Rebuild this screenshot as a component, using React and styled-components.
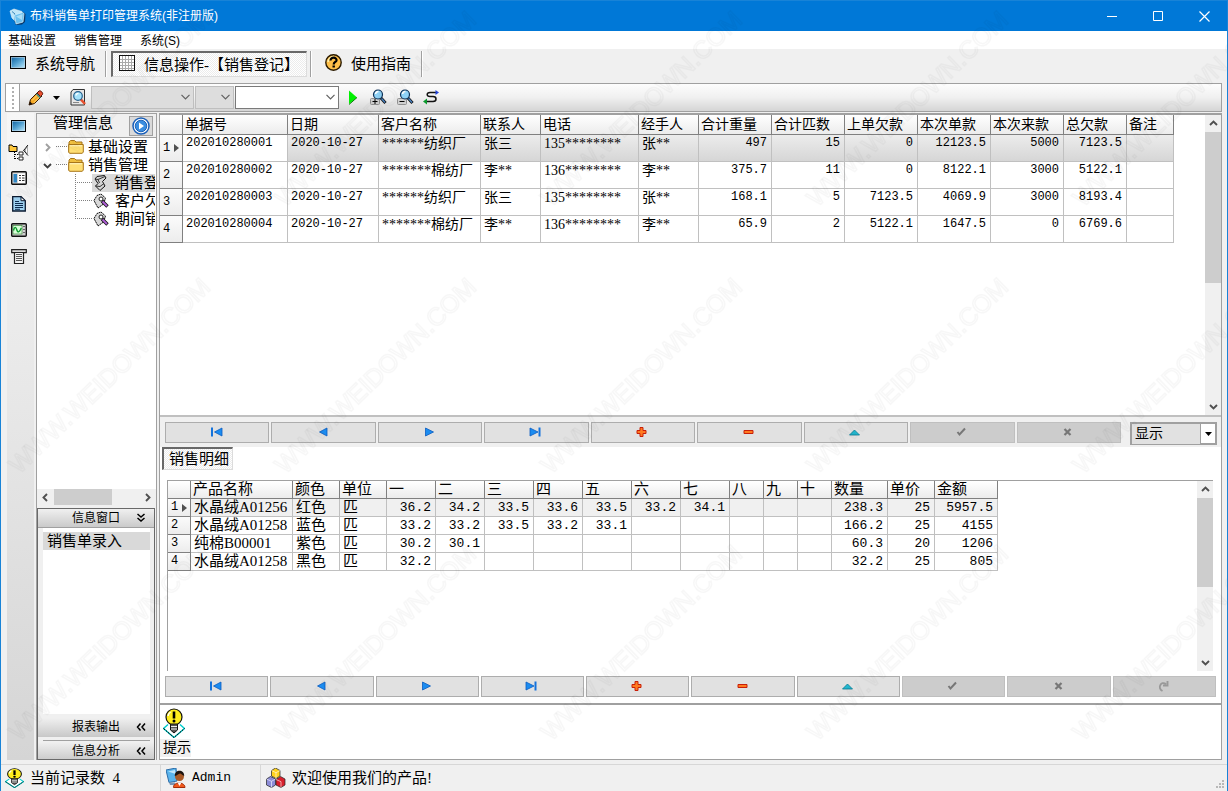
import React from 'react'
import styled, { createGlobalStyle, css } from 'styled-components'

const GlobalStyle = createGlobalStyle`
  * { box-sizing: border-box; }
  body {
    margin: 0;
    background: #f0f0f0;
    color: #000;
    font-family: "Liberation Serif", "Noto Sans CJK SC", serif;
    font-size: 15px;
    line-height: 18px;
  }
  button, select {
    margin: 0;
    padding: 0;
    border: 0;
    border-radius: 0;
    background: none;
    color: inherit;
    font: inherit;
  }
  a { color: inherit; text-decoration: none; }
  svg { display: block; flex: none; }
`

const mono = '"Liberation Mono", "Noto Sans CJK SC", monospace'

const Window = styled.div`
  position: relative;
  display: flex;
  flex-direction: column;
  min-height: 100vh;
  border: 1px solid #1883d7;
  overflow: hidden;
`

const TitleBar = styled.header`
  display: flex;
  align-items: center;
  height: 30px;
  padding-left: 8px;
  background: #0078d7;
  color: #fff;
`

const Title = styled.h1`
  flex: 1;
  margin: 0 0 0 4px;
  font: 12px/18px "Liberation Sans", "Noto Sans CJK SC", sans-serif;
`

const CaptionButton = styled.button`
  display: flex;
  align-items: center;
  justify-content: center;
  width: 46px;
  height: 30px;
`

const MenuBar = styled.nav`
  display: flex;
  gap: 18px;
  height: 18px;
  padding-left: 7px;
  background: #fff;
  font: 12px/20px "Liberation Sans", "Noto Sans CJK SC", sans-serif;
`

const TabBar = styled.div`
  display: flex;
  align-items: center;
  height: 33px;
  padding: 2px 0 5px;
`

const dither = css`
  background: repeating-conic-gradient(#fff 0 25%, #ececec 0 50%) 0 0 / 2px 2px;
`

const BarTab = styled.button`
  display: flex;
  align-items: center;
  gap: 9px;
  height: 26px;
  padding: 0 9px;
  white-space: nowrap;
  svg { margin-bottom: 3px; }
  ${p => p.$pressed && css`
    ${dither}
    padding: 0 7px 0 6px;
    border: 1px solid #dcdcdc;
    border-top: 2px solid #696969;
    border-left: 2px solid #696969;
  `}
`

const Divider = styled.div`
  width: 2px;
  height: 26px;
  margin: 0 4px 0 ${p => p.$wide ? 3 : 1}px;
  border-left: 1px solid #a0a0a0;
  border-right: 1px solid #fff;
`

const ToolBar = styled.div`
  display: flex;
  align-items: center;
  height: 29px;
  margin: 1px 5px 0 4px;
  border: 1px solid #a0a0a0;
  background: linear-gradient(#fdfdfd, #f0f0f0 50%, #d5d5d5);
`

const Grip = styled.div`
  display: flex;
  align-items: center;
  justify-content: center;
  align-self: stretch;
  width: 14px;
  margin-right: 2px;
  border-right: 1px solid #a0a0a0;
  background: #fff;
`

const ToolButton = styled.button`
  display: flex;
  align-items: center;
  justify-content: center;
  width: ${p => p.$width || 27}px;
  height: 24px;
`

const Picker = styled.div`
  position: relative;
  width: ${p => p.$width}px;
  height: 23px;
  margin-right: 1px;
  svg {
    position: absolute;
    top: 8px;
    right: 4px;
    pointer-events: none;
  }
  select {
    width: 100%;
    height: 23px;
    border: 1px solid #7a7a7a;
    background: #fff;
    appearance: none;
  }
  select:disabled {
    border-color: #bfbfbf;
    background: #ddd;
    opacity: 1;
  }
`

const Body = styled.div`
  display: flex;
  flex: 1;
  min-height: 0;
  margin: 1px 5px 0 6px;
`

const IconStrip = styled.nav`
  display: flex;
  flex-direction: column;
  align-items: center;
  gap: 10px;
  width: 27px;
  padding: 5px 4px 0 0;
  margin-right: 2px;
  background: linear-gradient(#f6f6f6, #d5d5d5);
`

const StripButton = styled.button`
  display: flex;
  align-items: center;
  justify-content: center;
  width: 22px;
  height: 16px;
`

const Sidebar = styled.aside`
  display: flex;
  flex-direction: column;
  width: 121px;
  margin-right: 2px;
  border: solid #a0a0a0;
  border-width: 1px 1px 0 1px;
`

const SideHead = styled.div`
  display: flex;
  align-items: center;
  justify-content: space-between;
  height: 24px;
  padding: 0 3px 0 16px;
  border-bottom: 1px solid #a0a0a0;
`

const SideTitle = styled.h2`
  margin: 0 0 5px;
  font-size: 15px;
  font-weight: normal;
`

const RoundButton = styled.button`
  display: flex;
  align-items: center;
  justify-content: center;
  width: 24px;
  height: 20px;
  border: 1px solid #a0a0a0;
  background: #dadada;
`

const Tree = styled.ul`
  flex: 1 0 350px;
  margin: 0;
  padding: 0;
  list-style: none;
  overflow: hidden;
  background: #fff;
`

const TreeNode = styled.li`
  display: flex;
  align-items: center;
  height: 18px;
  padding: 0 1px 0 ${p => p.$child ? 38 : 6}px;
  white-space: nowrap;
`

const Twig = styled.span`
  width: ${p => p.$child ? 17 : 11}px;
  height: ${p => p.$last ? 9 : 18}px;
  margin-left: ${p => p.$child ? 0 : 4}px;
  align-self: flex-start;
  flex: none;
  background: linear-gradient(90deg, #808080 50%, transparent 0) 0 8px / 2px 1px repeat-x;
  ${p => p.$child && css`
    background:
      linear-gradient(90deg, #808080 50%, transparent 0) 0 8px / 2px 1px repeat-x,
      linear-gradient(#808080 50%, transparent 0) 0 0 / 1px 2px repeat-y;
  `}
`

const NodeLabel = styled.a`
  display: flex;
  align-items: center;
  gap: ${p => p.$child ? 6 : 4}px;
  flex: 1;
  min-width: 0;
  padding-left: 1px;
  overflow: hidden;
  background: ${p => p.$active ? '#d9d9d9' : 'none'};
  span {
    flex: 1;
    min-width: 0;
    overflow: hidden;
  }
`

const HScroll = styled.div`
  display: grid;
  grid-template-columns: 17px 58px 1fr 17px;
  align-items: center;
  justify-items: center;
  height: 16px;
  background: #f0f0f0;
  span { width: 100%; height: 16px; background: #cdcdcd; }
`

const Accordion = styled.div`
  display: flex;
  flex-direction: column;
  height: 252px;
  margin: 3px 1px 0 0;
  border: 1px solid #696969;
  overflow: hidden;
`

const AccordionHead = styled.button`
  display: flex;
  align-items: center;
  justify-content: space-between;
  flex: none;
  height: 19px;
  padding: 0 8px 0 34px;
  border-bottom: 1px solid ${p => p.$open ? '#a0a0a0' : '#c8c8c8'};
  background: linear-gradient(#f0f0f0, #cacaca);
  font-size: 12px;
`

const AccordionBody = styled.div`
  flex: 1 0 186px;
  margin: 0 4px 4px 5px;
  padding-top: 4px;
  background: #fff;
`

const AccordionGap = styled.div`
  height: 5px;
  flex: none;
  margin: 0 4px 0 5px;
  background: linear-gradient(#a0a0a0, #a0a0a0) 0 3px / 100% 1px no-repeat;
`

const EntryLink = styled.a`
  display: block;
  padding-left: 4px;
  background: #d9d9d9;
`

const Main = styled.main`
  display: flex;
  flex: 1;
  flex-direction: column;
  min-width: 0;
  border: 1px solid #a0a0a0;
  background: #fff;
`

const GridPane = styled.div`
  display: flex;
  flex: ${p => p.$detail ? '2 0 191px' : '3 0 301px'};
  justify-content: space-between;
  min-width: 0;
  border-top: 1px solid #a0a0a0;
  ${p => p.$detail && css`
    margin: 10px 8px 5px 7px;
    border-left: 1px solid #a0a0a0;
  `}
`

const GridScroll = styled.div`
  flex: 1;
  min-width: 0;
  overflow: hidden;
`

const DataTable = styled.table`
  width: ${p => p.$width}px;
  border-spacing: 0;
  table-layout: fixed;
  white-space: nowrap;
  font-size: ${p => p.$size}px;

  th, td {
    height: ${p => p.$row}px;
    padding: 0 4px 0 3px;
    border-right: 1px solid #c0c0c0;
    border-bottom: 1px solid #c0c0c0;
    font-weight: normal;
    text-align: left;
    vertical-align: top;
    line-height: 17px;
    overflow: hidden;
  }
  thead th {
    height: ${p => p.$head}px;
    padding: 0 0 0 2px;
    border-color: #808080;
    background: linear-gradient(#fff, #ececec);
    line-height: ${p => p.$head - 1}px;
  }
`

const RowHead = styled.th`
  && {
    padding: 0 0 0 3px;
    border-color: #808080;
    background: linear-gradient(#fbfbfb, #ececec);
    vertical-align: middle;
    font-family: ${mono};
    font-size: 12px;
  }
  div {
    display: flex;
    align-items: center;
    gap: 4px;
  }
`

const Cell = styled.td`
  && {
    text-align: ${p => p.$kind === 'num' ? 'right' : 'left'};
    background: ${p => p.$fill};
    ${p => p.$kind && css`
      font-family: ${mono};
      font-size: ${p.$size}px;
    `}
  }
`

const VScroll = styled.div`
  display: flex;
  flex-direction: column;
  align-items: center;
  width: 16px;
  background: #f0f0f0;
`

const ScrollArrow = styled.button`
  display: flex;
  align-items: center;
  justify-content: center;
  width: 16px;
  height: 17px;
`

const ScrollTrack = styled.div`
  flex: 1;
  width: 16px;
  span {
    display: block;
    height: ${p => p.$thumb}px;
    background: #cdcdcd;
  }
`

const NavPanel = styled.div`
  display: flex;
  gap: 9px;
  padding: 5px 4px 2px 5px;
  height: 32px;
  border-top: 2px solid #c0c0c0;
  background: #f0f0f0;
`

const DetailNav = styled.div`
  padding: 0 5px 6px;
`

const Navigator = styled.div`
  display: flex;
  flex: 1;
  gap: 2px;
`

const NavButton = styled.button`
  display: flex;
  flex: 1;
  align-items: center;
  justify-content: center;
  height: 21px;
  padding: 0 2px 2px 0;
  border: 1px solid #adadad;
  background: #e1e1e1;
  &:disabled {
    border-color: #bfbfbf;
    background: #ccc;
  }
`

const ShowPicker = styled.div`
  position: relative;
  width: 87px;
  height: 23px;
  select {
    width: 100%;
    height: 23px;
    padding-left: 3px;
    border: 2px solid #a0a0a0;
    border-right-width: 1px;
    border-bottom-width: 1px;
    background: #e1e1e1;
    font-size: 14px;
    appearance: none;
  }
  span {
    position: absolute;
    top: 1px;
    right: 1px;
    display: flex;
    align-items: center;
    justify-content: center;
    width: 16px;
    height: 21px;
    border: 1px solid #a0a0a0;
    background: #fff;
    pointer-events: none;
  }
`

const DetailTab = styled.button`
  ${dither}
  align-self: flex-start;
  height: 23px;
  margin-left: 2px;
  padding: 0 3px 0 5px;
  border: 1px solid #dcdcdc;
  border-top: 2px solid #696969;
  border-left: 2px solid #696969;
`

const HintPane = styled.div`
  height: 56px;
  border-top: 2px solid #a0a0a0;
  svg { margin: 3px 0 0 3px; }
  span {
    display: inline-block;
    padding: 0 0 0 3px;
    background: #f0f0f0;
    font-size: 14px;
  }
`

const StatusBar = styled.footer`
  display: flex;
  align-items: stretch;
  height: 27px;
  margin-top: 4px;
  border-top: 1px solid #d7d7d7;
`

const StatusItem = styled.div`
  display: flex;
  align-items: center;
  gap: 6px;
  min-width: ${p => p.$width}px;
  padding-left: ${p => p.$first ? 4 : 5}px;
  border-right: ${p => p.$last ? 0 : 1}px solid #d7d7d7;
  flex: ${p => p.$last ? 1 : 'none'};
  font-family: ${p => p.$mono ? mono : 'inherit'};
  font-size: ${p => p.$mono ? 13 : 15}px;
  white-space: pre;
`

const SizeGrip = styled.div`
  align-self: flex-end;
  padding: 0 2px 2px 0;
`

const Overlay = styled.svg`
  position: absolute;
  inset: 0;
  width: 100%;
  height: 100%;
  pointer-events: none;
`

/* ---------- icons ---------- */

const AppIcon = () => (
  <svg width="17" height="17" viewBox="0 0 17 17">
    <path d="M1 3.500 6 1l8 3 2.500 2-.5 8-3 2.500-6 .5z" fill="#083a6c" />
    <path d="M1 3 5 1l8 2.500v3L6 13 3 10z" fill="#bfe6f8" stroke="#e8f8ff" strokeWidth=".6" />
    <path d="M3 3.500 6 6v8" fill="none" stroke="#3d86b8" />
    <path d="M5.500 7 13.500 4.500l1.500 1-1 8.500L7 16z" fill="#6cc0ee" stroke="#d8f3ff" strokeWidth=".7" />
    <path d="M7 8.500 13.500 6l-.5 6z" fill="#a8def8" />
  </svg>
)

const ScreenIcon = ({ width = 15, height = 12 }) => (
  <svg width={width} height={height} viewBox="0 0 15 12" preserveAspectRatio="none">
    <defs>
      <linearGradient id="screen" x2="1" y2="1">
        <stop stopColor="#1565a0" />
        <stop offset=".45" stopColor="#4c9cce" />
        <stop offset="1" stopColor="#b5e4f8" />
      </linearGradient>
    </defs>
    <rect x=".5" y=".5" width="14" height="11" fill="#c8e2f4" stroke="#000" />
    <rect x="1.500" y="1.500" width="12" height="9" fill="url(#screen)" />
  </svg>
)

const SheetIcon = () => (
  <svg width="16" height="16" viewBox="0 0 16 16" shapeRendering="crispEdges">
    <rect width="16" height="16" fill="#111" />
    <rect x="1" y="1" width="14" height="14" fill="#fff" />
    <path d="M1 4.500h14M1 7.500h14M1 10.500h14M1 13.500h14M3.500 1v14M6.500 1v14M9.500 1v14M12.500 1v14" stroke="#aaa" />
  </svg>
)

const HelpIcon = () => (
  <svg width="17" height="17" viewBox="0 0 17 17">
    <circle cx="8.500" cy="8.500" r="7.700" fill="#ffc04a" stroke="#2a1a00" strokeWidth="1.400" />
    <path d="M3 8a6 6 0 0 1 6-5.500" stroke="#fff3b0" strokeWidth="1.500" fill="none" />
    <path d="M5.500 6.500c0-4 6.500-3.500 6 0-.3 1.500-2.800 1.600-2.800 4" stroke="#000" strokeWidth="2.200" fill="none" />
    <rect x="7.500" y="11.500" width="2.400" height="2" fill="#000" />
  </svg>
)

const GripIcon = () => (
  <svg width="3" height="24" shapeRendering="crispEdges">
    <path d="M1.500 1v22" stroke="#b0b0b0" strokeWidth="2" strokeDasharray="2 2" />
  </svg>
)

const PencilIcon = () => (
  <svg width="16" height="16" viewBox="0 0 16 16">
    <path d="M1 15 2.500 9.500 10 2l4 4-7.500 7.500z" fill="#f5a623" stroke="#3b1c04" />
    <path d="m4 10.500 6.500-6.500M6 12.500l6.500-6.500" stroke="#ffe07a" />
    <path d="m9 3 2-2c1.500-1 4.500 2 3.500 3.500l-2 2z" fill="#e8502e" stroke="#5a1208" />
    <path d="m8.500 4 3.800 3.800" stroke="#3f8f86" strokeWidth="1.500" />
    <path d="M1 15 2 11.500 4.500 14z" fill="#1a1008" />
  </svg>
)

const CaretIcon = () => (
  <svg width="7" height="4"><path d="M0 0h7L3.500 4z" fill="#000" /></svg>
)

const PreviewIcon = () => (
  <svg width="16" height="17" viewBox="0 0 16 17">
    <path d="M3 .5h11.500V16H1V3z" fill="#e6e6e6" stroke="#333" />
    <path d="M3 13.500h6" stroke="#888" />
    <path d="m10.500 10 4.500 5" stroke="#e8502e" strokeWidth="2.600" />
    <circle cx="8" cy="7" r="4.300" fill="#a5e2fa" stroke="#27618f" strokeWidth="1.200" />
    <path d="M5.800 6.500A2.500 2.500 0 0 1 8.500 4.500" stroke="#fff" strokeWidth="1.300" fill="none" />
  </svg>
)

const ChevronIcon = () => (
  <svg width="9" height="6" viewBox="0 0 9 6">
    <path d="m.5.8 4 4 4-4" fill="none" stroke="#606060" strokeWidth="1.200" />
  </svg>
)

const RunIcon = () => (
  <svg width="10" height="15" viewBox="0 0 10 15">
    <path d="M1 .5 9 7.500 1 14z" fill="#00f000" />
    <path d="M9 7.500 1 14.500" stroke="#077a07" />
  </svg>
)

const ZoomIcon = ({ plus }) => (
  <svg width="17" height="17" viewBox="0 0 17 17">
    <rect x=".5" y="9.500" width="9" height="6" rx="1" fill="#d0d0d0" stroke="#909090" />
    <path d="m10.500 8.500 5 5.500" stroke="#111" strokeWidth="3" />
    <path d="m11.500 9.500 3.500 4" stroke="#4a86c8" strokeWidth="1.400" />
    <circle cx="8" cy="5.500" r="4.500" fill="#8fd2f6" stroke="#0d2f55" strokeWidth="1.200" />
    <path d="M5.500 5a3 3 0 0 1 3-2.500" stroke="#fff" strokeWidth="1.500" fill="none" />
    <path d={plus ? 'M2.500 12.500h5M5 10v5' : 'M2.500 12.500h5'} stroke="#000" />
  </svg>
)

const CurveIcon = () => (
  <svg width="17" height="15" viewBox="0 0 17 15">
    <path d="M13 2.500H7c-4 0-3.500 4 0 4h3c4 0 4 5 0 5H3" fill="none" stroke="#111" strokeWidth="1.500" />
    <path d="M16 2.500 12.500 0v5z" fill="#2343d8" />
    <path d="m0 11.500 4-3v6z" fill="#0b9a2d" />
  </svg>
)

const FlowIcon = () => (
  <svg width="21" height="17" viewBox="0 0 21 17">
    <path d="M1 2.500V1h3l1 1.500h4V7.500H1z" fill="#ffc83c" stroke="#000" />
    <path d="M6.500 8v7M7 10.500h4M7 14.500h4" stroke="#000" strokeDasharray="1 1" />
    <path d="M11 8h4v3h-4zM11 13h4v3h-4z" fill="#fff" stroke="#222" />
    <path d="M20 1c-1.200 1-2 3-4.500 5.500 2.500 1.500 3 4 4.500 5" fill="#aaa" stroke="#111" />
    <path d="M18.500 4.500v4" stroke="#fff" />
  </svg>
)

const ListIcon = () => (
  <svg width="16" height="14" viewBox="0 0 16 14">
    <rect x=".7" y=".7" width="14.600" height="12.600" rx="1" fill="#d6d6d6" stroke="#111" strokeWidth="1.400" />
    <rect x="2.500" y="3" width="3.500" height="8.500" fill="#2f86c4" />
    <rect x="7" y="2.500" width="7" height="9.500" fill="#fff" />
    <path d="M8 4.500h2M8 7h2M8 9.500h2M11 4.500h2.500M11 7h2.500M11 9.500h2.500" stroke="#333" />
  </svg>
)

const DocIcon = () => (
  <svg width="14" height="16" viewBox="0 0 14 16">
    <path d="M.7.700h8.300l4.300 4V15H.7z" fill="#9fd2f2" stroke="#0a1a30" strokeWidth="1.300" />
    <path d="M9 .7v4h4.300z" fill="#fff" stroke="#0a1a30" />
    <path d="M3 5.500h4M3 7.500h8M3 9.500h8M3 11.500h8M3 13.300h5" stroke="#0d2c50" />
  </svg>
)

const ScopeIcon = () => (
  <svg width="16" height="14" viewBox="0 0 16 14">
    <rect x=".7" y=".7" width="14.600" height="12.600" rx="1" fill="#cfcfcf" stroke="#111" strokeWidth="1.400" />
    <rect x="2" y="2.500" width="9" height="8.500" fill="#d8ffd8" stroke="#2a7a2a" strokeWidth=".6" />
    <path d="M2.500 7.500c1-4 2.300-4 3.300-.8s2.500 3 4.500-1.700" fill="none" stroke="#0a9a2a" strokeWidth="1.400" />
    <path d="M13 3v1M13 6v1M13 9v1" stroke="#222" strokeWidth="1.200" />
  </svg>
)

const ScrollIcon = () => (
  <svg width="16" height="15" viewBox="0 0 16 15">
    <path d="M.7.700h14.600v3H.7z" fill="#dcdcdc" stroke="#222" strokeWidth="1.200" />
    <path d="M3.500 3.500h9v11h-9z" fill="#f4f4f4" stroke="#222" strokeWidth="1.200" />
    <path d="M5 5.500h6M5 7.500h6M5 9.500h6M5 11.500h6" stroke="#555" />
  </svg>
)

const CirclePlayIcon = () => (
  <svg width="18" height="18" viewBox="0 0 18 18">
    <circle cx="9" cy="9" r="8" fill="#fff" stroke="#1a5fb8" strokeWidth="1.500" />
    <circle cx="9" cy="9" r="5.800" fill="#3a8de0" stroke="#1c62b8" />
    <path d="m7 5.500 5 3.500-5 3.500z" fill="#fff" />
  </svg>
)

const FolderIcon = () => (
  <svg width="16" height="14" viewBox="0 0 16 14">
    <path d="M1 12.500V2l1.500-1.500h4L8 2h6v2.500" fill="#f0c040" stroke="#a8761a" />
    <path d="M.7 4.500h14.600v7.500l-1 1.300H1.500L.7 12z" fill="#ffdf74" stroke="#a8761a" />
    <path d="M2 5.800h12" stroke="#fff6c8" />
  </svg>
)

const BillIcon = () => (
  <svg width="15" height="16" viewBox="0 0 15 16">
    <path d="m2 4 2-2.500L11.500.500 13 3l-3.500 3.500L12 11l-5 4.500L2.500 11 5 8.500z" fill="#d4d4d4" stroke="#111" />
    <path d="m2 4 3 .5 7-3M5 4.500 6.500 8M2.500 11l4.500.5 4-3" fill="none" stroke="#333" />
  </svg>
)

const TagIcon = () => (
  <svg width="16" height="16" viewBox="0 0 16 16">
    <path d="M1 7.500 4 2.500 8 1l4.500 4-2 6-5.500 4z" fill="#d8d8d8" stroke="#111" strokeDasharray="2 .5" />
    <circle cx="8" cy="6" r="2" fill="#fff" stroke="#222" />
    <path d="m9 8 5.500 5.500" stroke="#111" strokeWidth="3.400" />
    <path d="m9.500 8.500 4.500 4.500" stroke="#b060d8" strokeWidth="1.800" />
  </svg>
)

const DoubleChevron = ({ down }) => (
  <svg width="10" height="10" viewBox="0 0 10 10">
    <path
      d={down ? 'm1.500 1 3.500 3 3.500-3M1.500 5l3.500 3 3.500-3' : 'm4.500 1.500-3 3.500 3 3.500M9 1.500 6 5l3 3.500'}
      fill="none" stroke="#000" strokeWidth="1.500"
    />
  </svg>
)

const ArrowIcon = ({ turn = 0, color = '#505050' }) => (
  <svg width="9" height="9" viewBox="0 0 9 9">
    <path d="m1 6 3.500-3.500L8 6" fill="none" stroke={color} strokeWidth="1.900" transform={`rotate(${turn} 4.500 4.500)`} />
  </svg>
)

const blue = { fill: '#1b8cf0', stroke: '#0a5cc0', strokeWidth: 0.8 }

const navIcons = {
  first: <g><path d="M2 1.500h2v9H2z" fill="#1473dc" /><path d="M13 2v8L5.500 6z" {...blue} /></g>,
  prev: <path d="M12 2v8L4.500 6z" {...blue} />,
  next: <path d="M3.500 2v8L11.500 6z" {...blue} />,
  last: <g><path d="M2 2v8l8-4z" {...blue} /><path d="M10.500 1.500h2v9h-2z" fill="#1473dc" /></g>,
  add: <path d="M6 1.500h3v3h3v3H9v3H6v-3H3v-3h3z" fill="#ff7a20" stroke="#c81e08" />,
  remove: <path d="M3 4.500h9v3H3z" fill="#ff7a20" stroke="#c81e08" />,
  edit: <path d="M7.500 4 12.500 9h-10z" fill="#22b8d0" stroke="#087a92" strokeWidth=".8" />,
  post: <path d="m3.500 6 2 2.500 5.500-6" fill="none" stroke="#777" strokeWidth="2" />,
  cancel: <path d="m4.500 3 6 6M10.500 3l-6 6" stroke="#777" strokeWidth="2.200" />,
  refresh: <path d="M6.500 11C1 8 5 .5 10 4M11.500 1v4.500H7" fill="none" stroke="#999" strokeWidth="1.900" />,
}

const BulbIcon = ({ width = 22, height = 30 }) => (
  <svg width={width} height={height} viewBox="0 0 22 30" preserveAspectRatio="none">
    <path d="M5 16.500.5 20.500 11 29.500l10.500-9-4.500-4" fill="#fff" stroke="#0cc" strokeWidth="1.500" />
    <path d="M.5 20.500 11 29.500l10.500-9" fill="none" stroke="#000" strokeDasharray="2 1" />
    <circle cx="11" cy="9" r="8" fill="#ffee1c" stroke="#111" strokeWidth="1.200" />
    <path d="M7.500 16h7v6l-3.500 3-3.500-3z" fill="#555" stroke="#111" />
    <path d="M8 18.500h6M8 21h6" stroke="#eee" />
    <path d="M11 3.500v7" stroke="#000" strokeWidth="2.600" />
    <circle cx="11" cy="13" r="1.500" />
    <path d="M5 8a6 6 0 0 1 2.500-4" stroke="#fff" strokeWidth="1.500" fill="none" />
  </svg>
)

const UserIcon = () => (
  <svg width="20" height="20" viewBox="0 0 20 20">
    <path d="M0 2 10 0l1 13-8 1.500z" fill="#5ab4ec" stroke="#2b6ca8" />
    <path d="M2 3.500 9 2l.7 4z" fill="#bfe6fb" />
    <path d="M3 14.500h6v2.500H4z" fill="#7a96b4" />
    <path d="M7.500 19.500c-.5-6 11.500-6 11.500 0z" fill="#f0591c" stroke="#a52c08" />
    <path d="m11.500 14.500 2 3.500 2-3.500z" fill="#fff" />
    <circle cx="13.500" cy="8.500" r="4.500" fill="#a85a28" />
    <path d="M8.800 8C8.500 1 18.500 1 18.200 8c-2-1-3-2.500-4-2.500S11 7.500 8.800 8z" fill="#1c1410" />
  </svg>
)

const CubesIcon = () => (
  <svg width="20" height="20" viewBox="0 0 20 20">
    <g stroke="#222" strokeWidth=".7">
      <path d="m.5 11 4-2.500 5 2.500v6l-4 2.500-5-2.500z" fill="#8c8cd8" />
      <path d="m10 11.500 4.500-3 4.500 2.500v6l-4 2.500-5-2.500z" fill="#d8202c" />
      <path d="m5.500 2.500 4-2.500 4.500 2.500v5.500l-4 2.500-4.500-2.500z" fill="#ffd21c" />
    </g>
    <path d="m5.500 2.500 4.500 2.200v5.800M10 4.700l4-2.200M.5 11l5 2.300v6.200M5.500 13.300l4-2.300M10 11.500l5 2.200v5.800" fill="none" stroke="#fff" strokeOpacity=".6" />
  </svg>
)

/* ---------- data ---------- */

const orderColumns = [
  ['单据号', 105, 'code'], ['日期', 91, 'code'], ['客户名称', 102], ['联系人', 60], ['电话', 98],
  ['经手人', 60], ['合计重量', 73, 'num'], ['合计匹数', 73, 'num'], ['上单欠款', 73, 'num'],
  ['本次单款', 73, 'num'], ['本次来款', 73, 'num'], ['总欠款', 63, 'num'], ['备注', 47],
]

const orders = [
  ['202010280001', '2020-10-27', '******纺织厂', '张三', '135********', '张**', '497', '15', '0', '12123.5', '5000', '7123.5', ''],
  ['202010280002', '2020-10-27', '*******棉纺厂', '李**', '136********', '李**', '375.7', '11', '0', '8122.1', '3000', '5122.1', ''],
  ['202010280003', '2020-10-27', '******纺织厂', '张三', '135********', '张**', '168.1', '5', '7123.5', '4069.9', '3000', '8193.4', ''],
  ['202010280004', '2020-10-27', '*******棉纺厂', '李**', '136********', '李**', '65.9', '2', '5122.1', '1647.5', '0', '6769.6', ''],
]

const detailColumns = [
  ['产品名称', 102], ['颜色', 47], ['单位', 47],
  ...['一', '二', '三', '四', '五', '六', '七'].map(n => [n, 49, 'num']),
  ['八', 34, 'num'], ['九', 34, 'num'], ['十', 34, 'num'],
  ['数量', 56, 'num'], ['单价', 47, 'num'], ['金额', 63, 'num'],
]

const details = [
  ['水晶绒A01256', '红色', '匹', '36.2', '34.2', '33.5', '33.6', '33.5', '33.2', '34.1', '', '', '', '238.3', '25', '5957.5'],
  ['水晶绒A01258', '蓝色', '匹', '33.2', '33.2', '33.5', '33.2', '33.1', '', '', '', '', '', '166.2', '25', '4155'],
  ['纯棉B00001', '紫色', '匹', '30.2', '30.1', '', '', '', '', '', '', '', '', '60.3', '20', '1206'],
  ['水晶绒A01258', '黑色', '匹', '32.2', '', '', '', '', '', '', '', '', '', '32.2', '25', '805'],
]

const navActions = ['first', 'prev', 'next', 'last', 'add', 'remove', 'edit', 'post', 'cancel']
const disabledActions = ['post', 'cancel', 'refresh']

/* ---------- parts ---------- */

function Grid({ columns, rows, size, codeSize, head, row, fill, focusFill }) {
  const width = columns.reduce((sum, c) => sum + c[1], 23)
  return (
    <DataTable $width={width} $size={size} $head={head} $row={row}>
      <colgroup>
        <col width="23" />
        {columns.map(c => <col key={c[0]} width={c[1]} />)}
      </colgroup>
      <thead>
        <tr>
          <th />
          {columns.map(c => <th key={c[0]} scope="col">{c[0]}</th>)}
        </tr>
      </thead>
      <tbody>
        {rows.map((cells, i) => (
          <tr key={i}>
            <RowHead scope="row">
              <div>
                {i + 1}
                {i === 0 && <svg width="5" height="8"><path d="M0 0v8l5-4z" fill="#505050" /></svg>}
              </div>
            </RowHead>
            {cells.map((text, j) => (
              <Cell
                key={j}
                $kind={columns[j][2]}
                $size={codeSize}
                $fill={i ? '#fff' : j ? fill : focusFill}
              >
                {text}
              </Cell>
            ))}
          </tr>
        ))}
      </tbody>
    </DataTable>
  )
}

function ScrollBar({ thumb }) {
  return (
    <VScroll>
      <ScrollArrow aria-label="上"><ArrowIcon /></ScrollArrow>
      <ScrollTrack $thumb={thumb}><span /></ScrollTrack>
      <ScrollArrow aria-label="下"><ArrowIcon turn={180} /></ScrollArrow>
    </VScroll>
  )
}

function RecordNav({ actions }) {
  return (
    <Navigator>
      {actions.map(name => (
        <NavButton key={name} aria-label={name} disabled={disabledActions.includes(name)}>
          <svg width="15" height="12" viewBox="0 0 15 12">{navIcons[name]}</svg>
        </NavButton>
      ))}
    </Navigator>
  )
}

function Branch({ label, open }) {
  return (
    <TreeNode>
      <ArrowIcon turn={open ? 180 : 90} color={open ? '#404040' : '#a0a0a0'} />
      <Twig />
      <NodeLabel href="#"><FolderIcon /><span>{label}</span></NodeLabel>
    </TreeNode>
  )
}

function Leaf({ label, icon, active, last }) {
  return (
    <TreeNode $child>
      <Twig $child $last={last} />
      <NodeLabel href="#" $child $active={active}>{icon}<span>{label}</span></NodeLabel>
    </TreeNode>
  )
}

function Watermark() {
  return (
    <Overlay aria-hidden="true">
      <defs>
        <pattern id="mark" width="266" height="267" x="-8" y="230" patternUnits="userSpaceOnUse">
          <text
            transform="translate(26 244) rotate(-44)"
            fontFamily="Liberation Sans, sans-serif"
            fontSize="25"
            fill="none"
            stroke="#000"
            strokeOpacity=".03"
            strokeWidth="1.500"
          >
            WWW.WEIDOWN.COM
          </text>
        </pattern>
      </defs>
      <rect width="100%" height="100%" fill="url(#mark)" />
    </Overlay>
  )
}

export default function App() {
  return (
    <Window>
      <GlobalStyle />

      <TitleBar>
        <AppIcon />
        <Title>布料销售单打印管理系统(非注册版)</Title>
        <CaptionButton aria-label="最小化">
          <svg width="11" height="11"><path d="M0 5.500h10" stroke="#fff" /></svg>
        </CaptionButton>
        <CaptionButton aria-label="最大化">
          <svg width="11" height="11"><path d="M.5.500h9v9h-9z" fill="none" stroke="#fff" /></svg>
        </CaptionButton>
        <CaptionButton aria-label="关闭">
          <svg width="11" height="11"><path d="m.5.500 10 10M10.500.500l-10 10" stroke="#fff" strokeWidth="1.200" /></svg>
        </CaptionButton>
      </TitleBar>

      <MenuBar>
        <a href="#">基础设置</a>
        <a href="#">销售管理</a>
        <a href="#">系统(S)</a>
      </MenuBar>

      <TabBar>
        <BarTab><ScreenIcon width={16} height={13} />系统导航</BarTab>
        <Divider />
        <BarTab $pressed><SheetIcon />信息操作-【销售登记】</BarTab>
        <Divider $wide />
        <BarTab><HelpIcon />使用指南</BarTab>
        <Divider />
      </TabBar>

      <ToolBar>
        <Grip><GripIcon /></Grip>
        <ToolButton aria-label="编辑"><PencilIcon /></ToolButton>
        <ToolButton $width={15} aria-label="更多"><CaretIcon /></ToolButton>
        <ToolButton aria-label="预览"><PreviewIcon /></ToolButton>
        <Picker $width={103}><select disabled aria-label="字段" /><ChevronIcon /></Picker>
        <Picker $width={39}><select disabled aria-label="条件" /><ChevronIcon /></Picker>
        <Picker $width={104}><select aria-label="值" /><ChevronIcon /></Picker>
        <ToolButton $width={25} aria-label="执行"><RunIcon /></ToolButton>
        <ToolButton aria-label="放大"><ZoomIcon plus /></ToolButton>
        <ToolButton aria-label="缩小"><ZoomIcon /></ToolButton>
        <ToolButton $width={25} aria-label="刷新"><CurveIcon /></ToolButton>
      </ToolBar>

      <Body>
        <IconStrip>
          <StripButton aria-label="导航"><ScreenIcon /></StripButton>
          <StripButton aria-label="流程"><FlowIcon /></StripButton>
          <StripButton aria-label="列表"><ListIcon /></StripButton>
          <StripButton aria-label="文档"><DocIcon /></StripButton>
          <StripButton aria-label="图表"><ScopeIcon /></StripButton>
          <StripButton aria-label="报表"><ScrollIcon /></StripButton>
        </IconStrip>

        <Sidebar>
          <SideHead>
            <SideTitle>管理信息</SideTitle>
            <RoundButton aria-label="展开"><CirclePlayIcon /></RoundButton>
          </SideHead>
          <Tree>
            <Branch label="基础设置" />
            <Branch label="销售管理" open />
            <Leaf label="销售登记" icon={<BillIcon />} active />
            <Leaf label="客户欠款" icon={<TagIcon />} />
            <Leaf label="期间销售" icon={<TagIcon />} last />
          </Tree>
          <HScroll>
            <ArrowIcon turn={-90} />
            <span />
            <i />
            <ArrowIcon turn={90} />
          </HScroll>
          <Accordion>
            <AccordionHead $open>信息窗口<DoubleChevron down /></AccordionHead>
            <AccordionBody><EntryLink href="#">销售单录入</EntryLink></AccordionBody>
            <AccordionHead>报表输出<DoubleChevron /></AccordionHead>
            <AccordionGap />
            <AccordionHead>信息分析<DoubleChevron /></AccordionHead>
          </Accordion>
        </Sidebar>

        <Main>
          <GridPane>
            <GridScroll>
              <Grid
                columns={orderColumns}
                rows={orders}
                size={14}
                codeSize={12}
                head={20}
                row={27}
                fill="linear-gradient(#ececec, #d6d6d6)"
                focusFill="#fff"
              />
            </GridScroll>
            <ScrollBar thumb={151} />
          </GridPane>
          <NavPanel>
            <RecordNav actions={navActions} />
            <ShowPicker>
              <select aria-label="显示"><option>显示</option></select>
              <span><CaretIcon /></span>
            </ShowPicker>
          </NavPanel>
          <DetailTab>销售明细</DetailTab>
          <GridPane $detail>
            <GridScroll>
              <Grid
                columns={detailColumns}
                rows={details}
                size={15}
                codeSize={13}
                head={18}
                row={18}
                fill="#f0f0f0"
                focusFill="#f0f0f0"
              />
            </GridScroll>
            <ScrollBar thumb={89} />
          </GridPane>
          <DetailNav><RecordNav actions={[...navActions, 'refresh']} /></DetailNav>
          <HintPane>
            <BulbIcon />
            <span>提示</span>
          </HintPane>
        </Main>
      </Body>

      <StatusBar>
        <StatusItem $first $width={160}><BulbIcon width={19} height={20} />当前记录数  4</StatusItem>
        <StatusItem $width={100} $mono><UserIcon />Admin</StatusItem>
        <StatusItem $last><CubesIcon />欢迎使用我们的产品!</StatusItem>
        <SizeGrip>
          <svg width="9" height="9" shapeRendering="crispEdges">
            <path d="M6 0h2v2H6zM3 3h2v2H3zM6 3h2v2H6zM0 6h2v2H0zM3 6h2v2H3zM6 6h2v2H6z" fill="#b8b8b8" />
          </svg>
        </SizeGrip>
      </StatusBar>

      <Watermark />
    </Window>
  )
}
